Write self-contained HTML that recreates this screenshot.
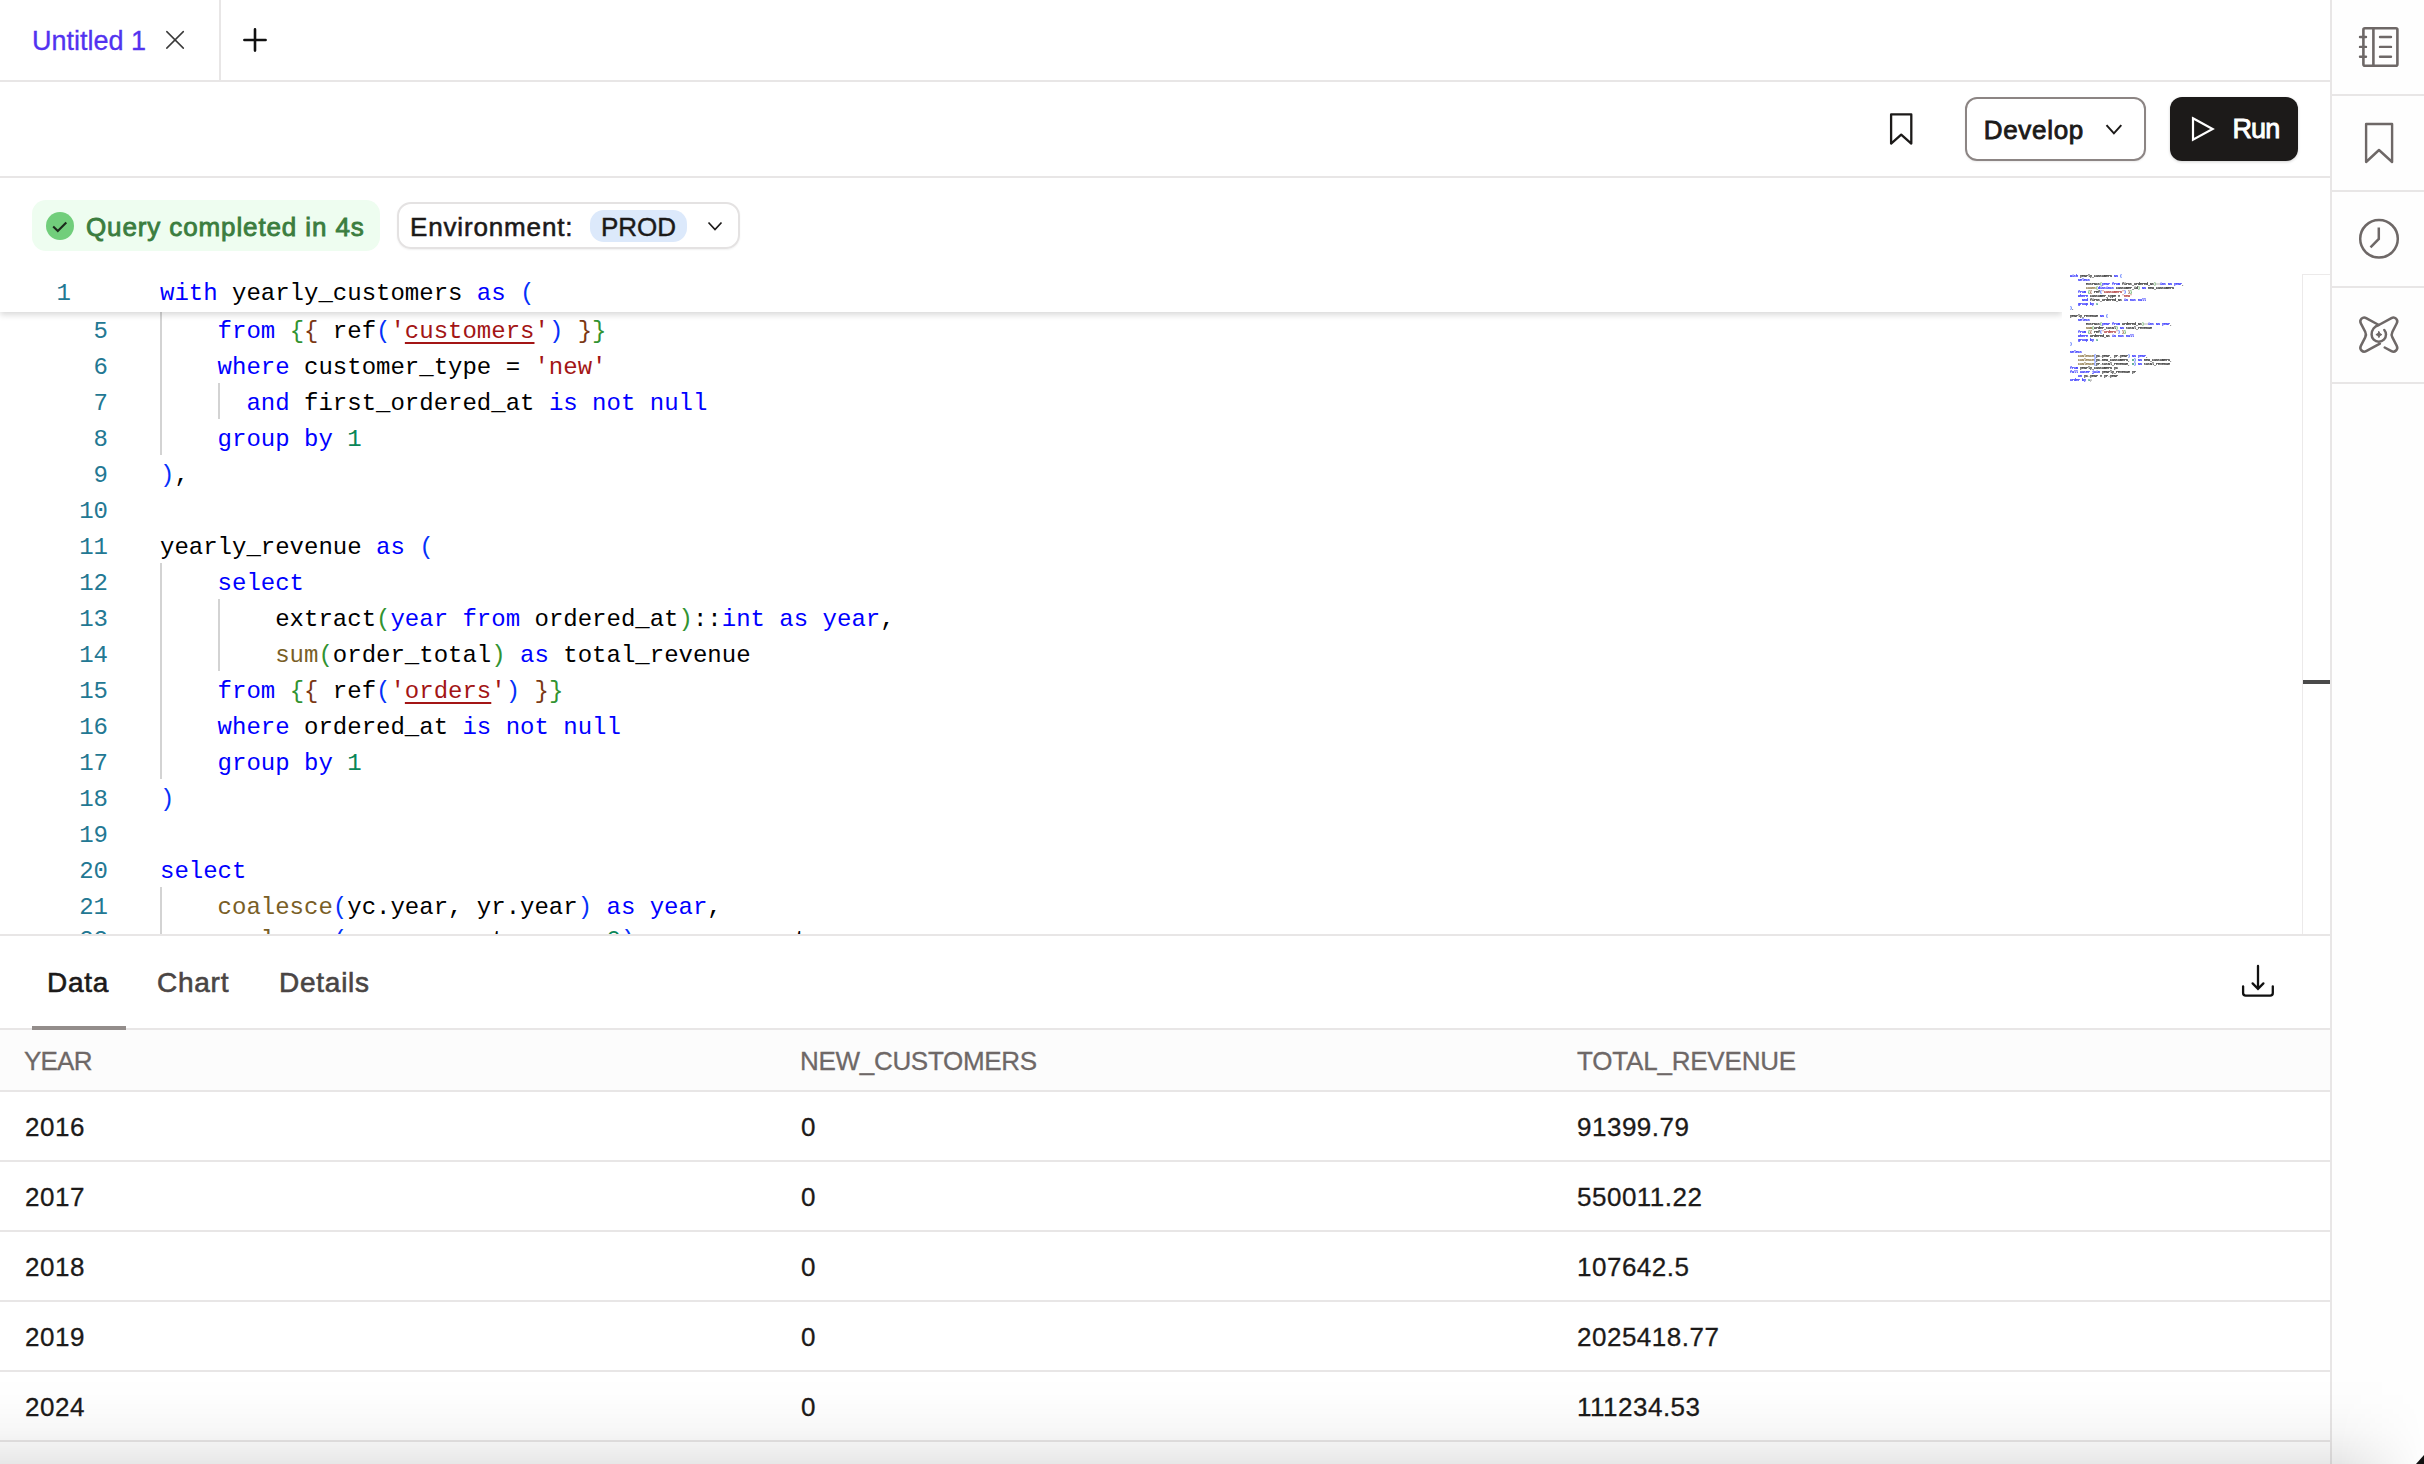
<!DOCTYPE html>
<html><head><meta charset="utf-8">
<style>
*{margin:0;padding:0;box-sizing:border-box}
html,body{width:2424px;height:1464px;overflow:hidden;background:#fff}
body{position:relative;font-family:"Liberation Sans",sans-serif;color:#1c1a19}
.a{position:absolute}
.t{position:absolute;white-space:nowrap;line-height:1}
.hl{position:absolute;height:2px;background:#e8e6e6}
.vl{position:absolute;width:2px;background:#e8e6e6}
svg{position:absolute;overflow:visible}
.code{position:absolute;left:160px;margin-top:3px;font-family:"Liberation Mono",monospace;font-size:24px;line-height:36px;white-space:pre;color:#000}
.ln{position:absolute;margin-top:3px;font-family:"Liberation Mono",monospace;font-size:24px;line-height:36px;color:#237893;text-align:right;width:108px;left:0}
.k{color:#0000ff}.f{color:#795e26}.s{color:#a31515}.n{color:#098658}
.b1{color:#0431fa}.b2{color:#319331}.b3{color:#7b3814}
.u{text-decoration:underline;text-decoration-thickness:2px;text-underline-offset:4px}
.guide{position:absolute;width:2px;background:#d3d3d3}
.cell{position:absolute;font-size:26px;line-height:1;white-space:nowrap;letter-spacing:0.5px;-webkit-text-stroke:0.3px currentColor}
</style></head><body>

<!-- TAB BAR -->
<div class="t" style="left:32px;top:28.4px;font-size:27px;color:#5232f0;-webkit-text-stroke:0.3px #5232f0">Untitled 1</div>
<svg style="left:0;top:0" width="1" height="1"><path d="M166.8 31.6 L183.3 48.1 M183.3 31.6 L166.8 48.1" stroke="#3a3a3a" stroke-width="1.5" fill="none" stroke-linecap="round"/></svg>
<div class="vl" style="left:219px;top:0;height:80px"></div>
<svg style="left:0;top:0" width="1" height="1"><path d="M255 29.4 V50.6 M244.4 40 H265.6" stroke="#111" stroke-width="2.6" fill="none" stroke-linecap="round"/></svg>
<div class="hl" style="left:0;top:80px;width:2330px"></div>

<!-- TOOLBAR -->
<div class="hl" style="left:0;top:176px;width:2330px"></div>
<svg style="left:0;top:0" width="1" height="1"><path d="M1891.1 114.4 H1911.3 V143.6 L1901.2 134.6 L1891.1 143.6 Z" stroke="#1c1a19" stroke-width="2.3" fill="none" stroke-linejoin="round"/></svg>
<div class="a" style="left:1965px;top:97px;width:181px;height:64px;border:2px solid #8c8584;border-radius:12px;box-shadow:0 1px 2px rgba(0,0,0,0.08)"></div>
<div class="t" style="left:1983.7px;top:116.6px;font-size:26px;font-weight:400;letter-spacing:0.7px;-webkit-text-stroke:0.85px #1c1a19">Develop</div>
<svg style="left:0;top:0" width="1" height="1"><path d="M2106.5 125.2 L2113.9 133.3 L2121.3 125.2" stroke="#1c1a19" stroke-width="2" fill="none"/></svg>
<div class="a" style="left:2170px;top:97px;width:128px;height:64px;background:#1c1a19;border-radius:12px;box-shadow:0 1px 3px rgba(0,0,0,0.18)"></div>
<svg style="left:0;top:0" width="1" height="1"><path d="M2193 118.3 L2212.6 129 L2193 139.7 Z" stroke="#fff" stroke-width="2.2" fill="none" stroke-linejoin="miter"/></svg>
<div class="t" style="left:2232.5px;top:116.3px;font-size:27px;font-weight:400;color:#fff;letter-spacing:-0.9px;-webkit-text-stroke:0.9px #fff">Run</div>

<!-- STATUS ROW -->
<div class="a" style="left:32px;top:200px;width:348px;height:51px;background:#eefdf0;border-radius:14px"></div>
<div class="a" style="left:46px;top:212px;width:28px;height:28px;background:#71ce7b;border-radius:50%"></div>
<svg style="left:0;top:0" width="1" height="1"><path d="M53.2 226.6 L57.8 231 L66.3 222.4" stroke="#1c2a1c" stroke-width="2.1" fill="none"/></svg>
<div class="t" style="left:86px;top:214.2px;font-size:26px;font-weight:400;color:#3b7d3f;letter-spacing:0.88px;-webkit-text-stroke:0.85px #3b7d3f">Query completed in 4s</div>

<div class="a" style="left:397px;top:202px;width:343px;height:47px;border:2px solid #e4e2e2;border-radius:14px;box-shadow:0 1px 2px rgba(0,0,0,0.06)"></div>
<div class="t" style="left:410px;top:213.8px;font-size:26px;font-weight:400;letter-spacing:0.85px;-webkit-text-stroke:0.55px #1c1a19">Environment:</div>
<div class="a" style="left:590px;top:210px;width:97px;height:32px;background:#dce9fb;border-radius:14px"></div>
<div class="t" style="left:601px;top:213.8px;font-size:26px;font-weight:400;-webkit-text-stroke:0.45px #1c1a19">PROD</div>
<svg style="left:0;top:0" width="1" height="1"><path d="M708.5 222.5 L715 229.5 L721.5 222.5" stroke="#1c1a19" stroke-width="1.7" fill="none"/></svg>

<!-- EDITOR -->
<div class="a" style="left:0;top:274px;width:2062px;height:660px;overflow:hidden">
<div class="ln" style="top:37px">5</div><div class="code" style="top:37px">    <span class="k">from</span> <span class="b2">{</span><span class="b3">{</span> ref<span class="b1">(</span><span class="s">'<span class="u">customers</span>'</span><span class="b1">)</span> <span class="b3">}</span><span class="b2">}</span></div>
<div class="ln" style="top:73px">6</div><div class="code" style="top:73px">    <span class="k">where</span> customer_type = <span class="s">'new'</span></div>
<div class="ln" style="top:109px">7</div><div class="code" style="top:109px">      <span class="k">and</span> first_ordered_at <span class="k">is</span> <span class="k">not</span> <span class="k">null</span></div>
<div class="ln" style="top:145px">8</div><div class="code" style="top:145px">    <span class="k">group</span> <span class="k">by</span> <span class="n">1</span></div>
<div class="ln" style="top:181px">9</div><div class="code" style="top:181px"><span class="b1">)</span>,</div>
<div class="ln" style="top:217px">10</div><div class="code" style="top:217px"></div>
<div class="ln" style="top:253px">11</div><div class="code" style="top:253px">yearly_revenue <span class="k">as</span> <span class="b1">(</span></div>
<div class="ln" style="top:289px">12</div><div class="code" style="top:289px">    <span class="k">select</span></div>
<div class="ln" style="top:325px">13</div><div class="code" style="top:325px">        extract<span class="b2">(</span><span class="k">year</span> <span class="k">from</span> ordered_at<span class="b2">)</span>::<span class="k">int</span> <span class="k">as</span> <span class="k">year</span>,</div>
<div class="ln" style="top:361px">14</div><div class="code" style="top:361px">        <span class="f">sum</span><span class="b2">(</span>order_total<span class="b2">)</span> <span class="k">as</span> total_revenue</div>
<div class="ln" style="top:397px">15</div><div class="code" style="top:397px">    <span class="k">from</span> <span class="b2">{</span><span class="b3">{</span> ref<span class="b1">(</span><span class="s">'<span class="u">orders</span>'</span><span class="b1">)</span> <span class="b3">}</span><span class="b2">}</span></div>
<div class="ln" style="top:433px">16</div><div class="code" style="top:433px">    <span class="k">where</span> ordered_at <span class="k">is</span> <span class="k">not</span> <span class="k">null</span></div>
<div class="ln" style="top:469px">17</div><div class="code" style="top:469px">    <span class="k">group</span> <span class="k">by</span> <span class="n">1</span></div>
<div class="ln" style="top:505px">18</div><div class="code" style="top:505px"><span class="b1">)</span></div>
<div class="ln" style="top:541px">19</div><div class="code" style="top:541px"></div>
<div class="ln" style="top:577px">20</div><div class="code" style="top:577px"><span class="k">select</span></div>
<div class="ln" style="top:613px">21</div><div class="code" style="top:613px">    <span class="f">coalesce</span><span class="b1">(</span>yc.year, yr.year<span class="b1">)</span> <span class="k">as</span> <span class="k">year</span>,</div>
<div class="ln" style="top:646px">22</div><div class="code" style="top:646px">    <span class="f">coalesce</span><span class="b1">(</span>yc.new_customers, <span class="n">0</span><span class="b1">)</span> <span class="k">as</span> new_customers,</div>
<div class="guide" style="left:160px;top:37px;height:144px"></div>
<div class="guide" style="left:218px;top:109px;height:36px"></div>
<div class="guide" style="left:160px;top:289px;height:216px"></div>
<div class="guide" style="left:218px;top:325px;height:72px"></div>
<div class="guide" style="left:160px;top:613px;height:60px"></div>
<div class="a" style="left:0;top:0;width:2062px;height:38px;background:#fff;box-shadow:0 3px 6px rgba(0,0,0,0.15)"><div class="ln" style="top:-1px;width:71px">1</div><div class="code" style="top:-1px"><span class="k">with</span> yearly_customers <span class="k">as</span> <span class="b1">(</span></div></div>
</div>


<!-- MINIMAP -->
<div class="a" style="left:2070px;top:273.7px;width:1200px;transform-origin:0 0;transform:scale(0.13889);font-family:'Liberation Mono',monospace;font-size:24px;line-height:28.8px;white-space:pre;color:#000;font-weight:700;-webkit-text-stroke:0.6px currentColor"><span class="k">with</span> yearly_customers <span class="k">as</span> <span class="b1">(</span>
    <span class="k">select</span>
        extract<span class="b2">(</span><span class="k">year</span> <span class="k">from</span> first_ordered_at<span class="b2">)</span>::<span class="k">int</span> <span class="k">as</span> <span class="k">year</span>,
        <span class="f">count</span><span class="b2">(</span><span class="k">distinct</span> customer_id<span class="b2">)</span> <span class="k">as</span> new_customers
    <span class="k">from</span> <span class="b2">{</span><span class="b3">{</span> ref<span class="b1">(</span><span class="s">'customers'</span><span class="b1">)</span> <span class="b3">}</span><span class="b2">}</span>
    <span class="k">where</span> customer_type = <span class="s">'new'</span>
      <span class="k">and</span> first_ordered_at <span class="k">is</span> <span class="k">not</span> <span class="k">null</span>
    <span class="k">group</span> <span class="k">by</span> <span class="n">1</span>
<span class="b1">)</span>,

yearly_revenue <span class="k">as</span> <span class="b1">(</span>
    <span class="k">select</span>
        extract<span class="b2">(</span><span class="k">year</span> <span class="k">from</span> ordered_at<span class="b2">)</span>::<span class="k">int</span> <span class="k">as</span> <span class="k">year</span>,
        <span class="f">sum</span><span class="b2">(</span>order_total<span class="b2">)</span> <span class="k">as</span> total_revenue
    <span class="k">from</span> <span class="b2">{</span><span class="b3">{</span> ref<span class="b1">(</span><span class="s">'orders'</span><span class="b1">)</span> <span class="b3">}</span><span class="b2">}</span>
    <span class="k">where</span> ordered_at <span class="k">is</span> <span class="k">not</span> <span class="k">null</span>
    <span class="k">group</span> <span class="k">by</span> <span class="n">1</span>
<span class="b1">)</span>

<span class="k">select</span>
    <span class="f">coalesce</span><span class="b1">(</span>yc.year, yr.year<span class="b1">)</span> <span class="k">as</span> <span class="k">year</span>,
    <span class="f">coalesce</span><span class="b1">(</span>yc.new_customers, <span class="n">0</span><span class="b1">)</span> <span class="k">as</span> new_customers,
    <span class="f">coalesce</span><span class="b1">(</span>yr.total_revenue, <span class="n">0</span><span class="b1">)</span> <span class="k">as</span> total_revenue
<span class="k">from</span> yearly_customers yc
<span class="k">full</span> <span class="k">outer</span> <span class="k">join</span> yearly_revenue yr
    <span class="k">on</span> yc.year = yr.year
<span class="k">order</span> <span class="k">by</span> <span class="n">1</span>;</div>
<!-- EDITOR RIGHT RULER -->
<div class="vl" style="left:2302px;top:274px;height:660px;width:1px;background:#eceaea"></div>
<div class="a" style="left:2302px;top:274px;width:28px;height:1px;background:#eceaea"></div>
<div class="a" style="left:2303px;top:680px;width:27px;height:4px;background:#4a4a4a"></div>

<!-- BOTTOM PANEL -->
<div class="hl" style="left:0;top:934px;width:2330px"></div>
<div class="t" style="left:47px;top:968.6px;font-size:28px;font-weight:400;color:#1c1a19;letter-spacing:0.75px;-webkit-text-stroke:0.6px #1c1a19">Data</div>
<div class="t" style="left:157px;top:968.6px;font-size:28px;font-weight:400;color:#4a4544;letter-spacing:0.75px;-webkit-text-stroke:0.6px #4a4544">Chart</div>
<div class="t" style="left:279px;top:968.6px;font-size:28px;font-weight:400;color:#4a4544;letter-spacing:0.75px;-webkit-text-stroke:0.6px #4a4544">Details</div>
<svg style="left:0;top:0" width="1" height="1"><path d="M2258 966 V988.3 M2252.6 983.4 L2258 988.8 L2263.4 983.4 M2243.1 986.3 V993 Q2243.1 995.6 2245.7 995.6 H2270.2 Q2272.8 995.6 2272.8 993 V986.3" stroke="#111" stroke-width="2.3" fill="none" stroke-linecap="round"/></svg>
<div class="hl" style="left:0;top:1028px;width:2330px"></div>
<div class="a" style="left:32px;top:1025.5px;width:94px;height:4px;background:#938d8b"></div>
<div class="a" style="left:0;top:1030px;width:2330px;height:60px;background:#fcfcfc"></div>
<div class="hl" style="left:0;top:1090px;width:2330px"></div>
<div class="cell" style="left:24px;top:1048px;color:#6e6867;letter-spacing:-0.8px">YEAR</div>
<div class="cell" style="left:800px;top:1048px;color:#6e6867;letter-spacing:-0.3px">NEW_CUSTOMERS</div>
<div class="cell" style="left:1577px;top:1048px;color:#6e6867;letter-spacing:-0.2px">TOTAL_REVENUE</div>
<div class="cell" style="left:25px;top:1114.0px">2016</div><div class="cell" style="left:801px;top:1114.0px">0</div><div class="cell" style="left:1577px;top:1114.0px">91399.79</div>
<div class="hl" style="left:0;top:1160px;width:2330px"></div>
<div class="cell" style="left:25px;top:1184.0px">2017</div><div class="cell" style="left:801px;top:1184.0px">0</div><div class="cell" style="left:1577px;top:1184.0px">550011.22</div>
<div class="hl" style="left:0;top:1230px;width:2330px"></div>
<div class="cell" style="left:25px;top:1254.0px">2018</div><div class="cell" style="left:801px;top:1254.0px">0</div><div class="cell" style="left:1577px;top:1254.0px">107642.5</div>
<div class="hl" style="left:0;top:1300px;width:2330px"></div>
<div class="cell" style="left:25px;top:1324.0px">2019</div><div class="cell" style="left:801px;top:1324.0px">0</div><div class="cell" style="left:1577px;top:1324.0px">2025418.77</div>
<div class="hl" style="left:0;top:1370px;width:2330px"></div>
<div class="cell" style="left:25px;top:1394.0px">2024</div><div class="cell" style="left:801px;top:1394.0px">0</div><div class="cell" style="left:1577px;top:1394.0px">111234.53</div>
<div class="hl" style="left:0;top:1440px;width:2330px"></div>

<!-- RIGHT SIDEBAR -->
<div class="a" style="left:2332px;top:0;width:92px;height:1464px;background:#fefefe"></div>
<div class="vl" style="left:2330px;top:0;height:1464px"></div>
<div class="hl" style="left:2332px;top:94px;width:92px"></div>
<div class="hl" style="left:2332px;top:190px;width:92px"></div>
<div class="hl" style="left:2332px;top:286px;width:92px"></div>
<div class="hl" style="left:2332px;top:382px;width:92px"></div>

<svg style="left:0;top:0" width="1" height="1"><g stroke="#6e6867" stroke-width="2.6" fill="none" stroke-linecap="round" stroke-linejoin="round">
<rect x="2363.4" y="28.3" width="34" height="37.4" rx="1.5"/>
<path d="M2373.4 28.3 V65.7"/>
<path d="M2360 37 H2366 M2360 46.9 H2366 M2360 56.7 H2366" stroke-width="2.4"/>
<path d="M2380 37 H2391 M2380 46.9 H2391 M2380 56.7 H2391" stroke-width="2.4"/>
</g></svg>
<svg style="left:0;top:0" width="1" height="1"><path d="M2366.1 124 H2392.1 V162 L2379 150 L2366.1 162 Z" stroke="#6e6867" stroke-width="2.4" fill="none" stroke-linejoin="round"/></svg>
<svg style="left:0;top:0" width="1" height="1"><g stroke="#6e6867" stroke-width="2.5" fill="none" stroke-linecap="butt"><circle cx="2379" cy="238.8" r="18.8"/><path d="M2378.8 227.5 V239 L2370.5 247.3"/></g></svg>
<svg style="left:0;top:0" width="1" height="1"><g transform="translate(2354,310)" stroke="#6e6867" stroke-width="2.5" fill="none" stroke-linecap="round" stroke-linejoin="round">
<path d="M30.7 37.5 L37.43 41.13 A3.9 3.9 0 0 0 42.77 35.9 L38.4 27.4 Q36.9 24.6 38.4 21.8 L42.77 13.3 A3.9 3.9 0 0 0 37.43 8.07 L24.8 15 L12.17 8.07 A3.9 3.9 0 0 0 6.83 13.3 L11.2 21.8 Q12.7 24.6 11.2 27.4 L6.83 35.9 A3.9 3.9 0 0 0 12.17 41.13 L25.9 33.7"/>
<path d="M24.8 15 C20.5 16.2 17.6 20 17.6 24.6 A7.2 7.2 0 0 0 32 24.6 A7.2 7.2 0 0 0 30.3 20"/>
<path d="M24.9 21.6 L25.9 23.6 L27.9 24.6 L25.9 25.6 L24.9 27.6 L23.9 25.6 L21.9 24.6 L23.9 23.6 Z" fill="#6e6867" stroke-width="1"/>
</g></svg>


<div class="a" style="left:0;top:1375px;width:2424px;height:89px;background:linear-gradient(to bottom,rgba(0,0,0,0) 0%,rgba(0,0,0,0.008) 30%,rgba(0,0,0,0.03) 62%,rgba(0,0,0,0.065) 86%,rgba(0,0,0,0.095) 100%);-webkit-mask-image:linear-gradient(to right,#000 2340px,rgba(0,0,0,0) 2424px)"></div>
<svg style="left:0;top:0" width="1" height="1"><path d="M2424 1455 L2424 1464 L2416 1464 Z" fill="#111"/></svg>
</body></html>
